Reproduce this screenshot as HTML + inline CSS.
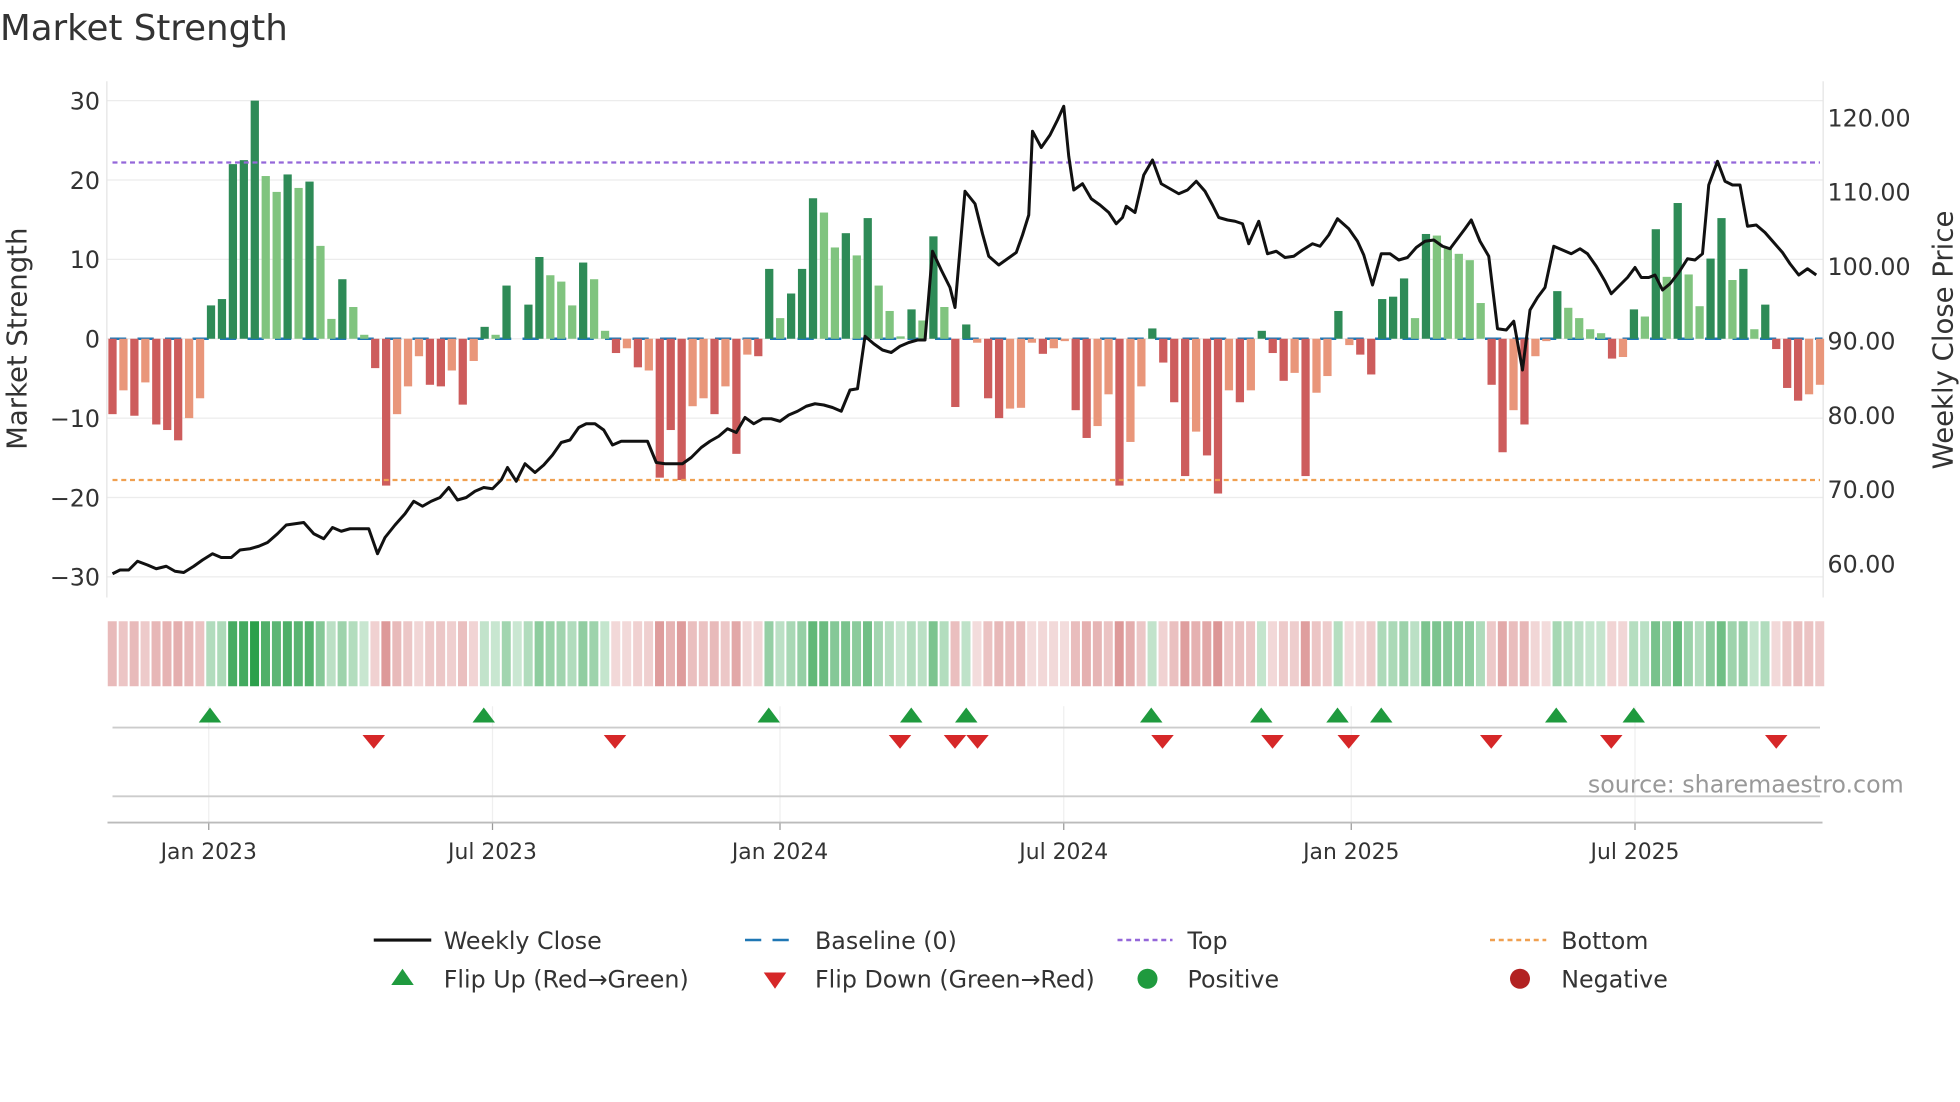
<!DOCTYPE html>
<html><head><meta charset="utf-8"><style>
html,body{margin:0;padding:0;background:#fff;}
svg{display:block;font-family:"DejaVu Sans","Liberation Sans",sans-serif;}
</style></head><body>
<svg id="c" width="1960" height="1102" viewBox="0 0 1568 881.6" xmlns="http://www.w3.org/2000/svg">
<text x="0" y="32" font-size="28.5" fill="#333">Market Strength</text>
<g id="grid"></g>
<g id="bars"></g>
<g id="strip"></g>
<g id="marks"></g>
<text x="0" y="0" transform="translate(21,271) rotate(-90)" font-size="22" fill="#333" text-anchor="middle">Market Strength</text>
<text x="0" y="0" transform="translate(1562,272) rotate(-90)" font-size="22" fill="#333" text-anchor="middle">Weekly Close Price</text>
<text x="1523" y="634" font-size="19" fill="#999" text-anchor="end">source: sharemaestro.com</text>
<g font-size="19" fill="#333">
<line x1="299" y1="752" x2="345" y2="752" stroke="#111" stroke-width="2.5"/>
<text x="355" y="759">Weekly Close</text>
<line x1="596" y1="752" x2="640" y2="752" stroke="#1f77b4" stroke-width="2" stroke-dasharray="13,9"/>
<text x="652" y="759">Baseline (0)</text>
<line x1="894" y1="752" x2="938" y2="752" stroke="#9467d9" stroke-width="2" stroke-dasharray="4,3"/>
<text x="950" y="759">Top</text>
<line x1="1192" y1="752" x2="1237" y2="752" stroke="#f0a050" stroke-width="2" stroke-dasharray="4,3"/>
<text x="1249" y="759">Bottom</text>
<polygon points="313,788 331,788 322,775" fill="#1f9a3e"/>
<text x="355" y="790">Flip Up (Red→Green)</text>
<polygon points="611,778 629,778 620,791" fill="#d62728"/>
<text x="652" y="790">Flip Down (Green→Red)</text>
<circle cx="918" cy="783" r="8" fill="#1f9a3e"/>
<text x="950" y="790">Positive</text>
<circle cx="1216" cy="783" r="8" fill="#b22222"/>
<text x="1249" y="790">Negative</text>
</g>
</svg>
<script>
var NS="http://www.w3.org/2000/svg";
function el(p,t,a,txt){var e=document.createElementNS(NS,t);for(var k in a)e.setAttribute(k,a[k]);if(txt!=null)e.textContent=txt;p.appendChild(e);return e;}
var g=document.getElementById('grid'),b=document.getElementById('bars'),s=document.getElementById('strip'),m=document.getElementById('marks');
function yv(v){return 271-v*6.35;}
for(var v=-30;v<=30;v+=10){var y=yv(v);el(g,'line',{x1:86,x2:1458,y1:y,y2:y,stroke:'#ececec','stroke-width':1});
el(g,'text',{x:80,y:y+7,'font-size':19,fill:'#333','text-anchor':'end'},(v<0?'\u2212':'')+Math.abs(v));}
for(var p=60;p<=120;p+=10){var y=451-(p-60)*5.95;el(g,'text',{x:1462,y:y+7,'font-size':19,fill:'#333'},p.toFixed(2));}
el(g,'line',{x1:85.5,x2:85.5,y1:65,y2:478,stroke:'#e4e4e4'});
el(g,'line',{x1:1458.5,x2:1458.5,y1:65,y2:478,stroke:'#e4e4e4'});
var xt=[[167,'Jan 2023'],[394,'Jul 2023'],[624,'Jan 2024'],[851,'Jul 2024'],[1081,'Jan 2025'],[1308,'Jul 2025']];
xt.forEach(function(t){el(g,'line',{x1:t[0],x2:t[0],y1:565,y2:658,stroke:'#efefef'});el(g,'line',{x1:t[0],x2:t[0],y1:658,y2:664,stroke:'#999'});el(g,'text',{x:t[0],y:687,'font-size':17.5,fill:'#333','text-anchor':'middle'},t[1]);});
el(g,'line',{x1:90,x2:1456,y1:582,y2:582,stroke:'#ccc','stroke-width':1.5});
el(g,'line',{x1:90,x2:1456,y1:637,y2:637,stroke:'#ccc','stroke-width':1.5});
el(g,'line',{x1:86,x2:1458,y1:658,y2:658,stroke:'#bbb','stroke-width':1.5});
var d=[-9.5,1,-6.5,0,-9.7,1,-5.5,0,-10.8,1,-11.5,1,-12.8,1,-10,0,-7.5,0,4.2,1,5,1,22,1,22.5,1,30,1,20.5,0,18.5,0,20.7,1,19,0,19.8,1,11.7,0,2.5,0,7.5,1,4,0,0.5,0,-3.7,1,-18.5,1,-9.5,0,-6,0,-2.2,0,-5.8,1,-6,1,-4,0,-8.3,1,-2.8,0,1.5,1,0.5,0,6.7,1,0,0,4.3,1,10.3,1,8,0,7.2,0,4.2,0,9.6,1,7.5,0,1,0,-1.8,1,-1.2,0,-3.6,1,-4,0,-17.5,1,-11.5,1,-17.8,1,-8.5,0,-7.5,0,-9.5,1,-6,0,-14.5,1,-2,0,-2.2,1,8.8,1,2.6,0,5.7,1,8.8,1,17.7,1,15.9,0,11.5,0,13.3,1,10.5,0,15.2,1,6.7,0,3.5,0,0.3,0,3.7,1,2.3,0,12.9,1,4,0,-8.6,1,1.8,1,-0.5,0,-7.5,1,-10,1,-8.8,0,-8.7,0,-0.5,0,-1.9,1,-1.2,0,-0.3,0,-9,1,-12.5,1,-11,0,-7,0,-18.5,1,-13,0,-6,0,1.3,1,-3,1,-8,1,-17.3,1,-11.7,0,-14.7,1,-19.5,1,-6.5,0,-8,1,-6.5,0,1,1,-1.8,1,-5.3,1,-4.3,0,-17.3,1,-6.8,0,-4.7,0,3.5,1,-0.8,0,-2,1,-4.5,1,5,1,5.3,1,7.6,1,2.6,0,13.2,1,13,0,11.5,0,10.7,0,9.9,0,4.5,0,-5.8,1,-14.3,1,-9,0,-10.8,1,-2.2,0,-0.3,0,6,1,3.9,0,2.6,0,1.2,0,0.7,0,-2.5,1,-2.3,0,3.7,1,2.8,0,13.8,1,7.8,0,17.1,1,8.1,0,4.1,0,10.1,1,15.2,1,7.4,0,8.8,1,1.2,0,4.3,1,-1.3,1,-6.2,1,-7.8,1,-7,0,-5.8,0];
var n=d.length/2, x0=90, dx=(1456-90)/(n-1);
el(b,'line',{x1:88,x2:1458,y1:271,y2:271,stroke:'#1f77b4','stroke-width':2,'stroke-dasharray':'13,9'});
for(var i=0;i<n;i++){var v=d[2*i],dk=d[2*i+1],x=x0+i*dx;
 var c=v>=0?(dk?'#2e8b57':'#80c47f'):(dk?'#cd5c5c':'#e9967a');
 var y1=yv(Math.max(v,0)),h=Math.abs(v)*6.35;
 el(b,'rect',{x:x-3.3,y:y1,width:6.6,height:h,fill:c});
 var a=Math.min(1,0.25+Math.abs(v)/30*0.85);
 var sc=v>=0?'rgba(44,160,75,'+a.toFixed(2)+')':'rgba(200,90,90,'+(a*0.8).toFixed(2)+')';
 el(s,'rect',{x:x-3.8,y:497,width:7.2,height:52,fill:sc});
}
el(b,'line',{x1:90,x2:1456,y1:130,y2:130,stroke:'#9467d9','stroke-width':1.8,'stroke-dasharray':'4,3'});
el(b,'line',{x1:90,x2:1456,y1:384,y2:384,stroke:'#f0a050','stroke-width':1.8,'stroke-dasharray':'4,3'});
var pts="90,459 96,456 103,456 110,449 118,452 125,455 133,453 140,457 147,458 155,453 162,448 170,443 177,446 185,446 192,440 200,439 207,437 214,434 222,427 229,420 236,419 243,418 251,427 259,431 266,422 273,425 280,423 288,423 295,423 302,443 308,430 316,420 324,411 331,401 338,405 345,401 352,398 359,390 366,400 373,398 380,393 387,390 394,391 401,384 406,374 413,385 420,371 428,378 435,372 442,364 449,354 456,352 463,342 469,339 476,339 483,344 490,356 497,353 504,353 511,353 518,353 525,370 532,371 539,371 546,371 553,366 561,358 568,353 575,349 582,343 589,346 596,334 603,339 610,335 617,335 624,337 631,332 638,329 645,325 652,323 659,324 666,326 673,329 680,312 686,311 692,269 699,275 706,280 713,282 720,277 727,274 734,272 740,272 746,201 753,216 760,230 764,246 772,153 780,163 786,187 791,205 799,212 806,207 813,202 818,188 823,172 826,105 833,118 840,108 846,96 851,85 855,125 859,152 866,147 873,159 880,164 887,170 893,179 898,174 901,165 908,170 915,140 922,128 929,147 936,151 943,155 950,152 957,145 964,153 970,164 975,174 982,176 988,177 994,179 999,195 1007,177 1014,203 1021,201 1028,206 1035,205 1042,200 1050,195 1056,197 1063,188 1070,175 1079,183 1086,193 1091,204 1098,228 1105,203 1112,203 1119,208 1126,206 1133,198 1140,193 1147,192 1154,197 1160,199 1166,191 1172,183 1177,176 1184,193 1191,205 1198,263 1205,264 1211,257 1218,296 1224,248 1230,238 1236,230 1243,197 1250,200 1257,203 1264,199 1270,203 1277,213 1284,225 1289,235 1296,228 1302,222 1308,214 1313,222 1319,222 1324,220 1330,232 1336,227 1343,218 1350,207 1356,208 1362,203 1367,148 1374,129 1380,145 1386,148 1392,148 1398,181 1405,180 1412,186 1419,194 1426,202 1432,211 1439,220 1446,215 1453,220";
el(b,'polyline',{points:pts,fill:'none',stroke:'#111','stroke-width':2.4,'stroke-linejoin':'round'});
[168,387,615,729,773,921,1009,1070,1105,1245,1307].forEach(function(x){el(m,'polygon',{points:(x-9)+',578 '+(x+9)+',578 '+x+',566',fill:'#1f9a3e'});});
[299,492,720,764,782,930,1018,1079,1193,1289,1421].forEach(function(x){el(m,'polygon',{points:(x-9)+',588 '+(x+9)+',588 '+x+',599',fill:'#d62728'});});
</script>
</body></html>
